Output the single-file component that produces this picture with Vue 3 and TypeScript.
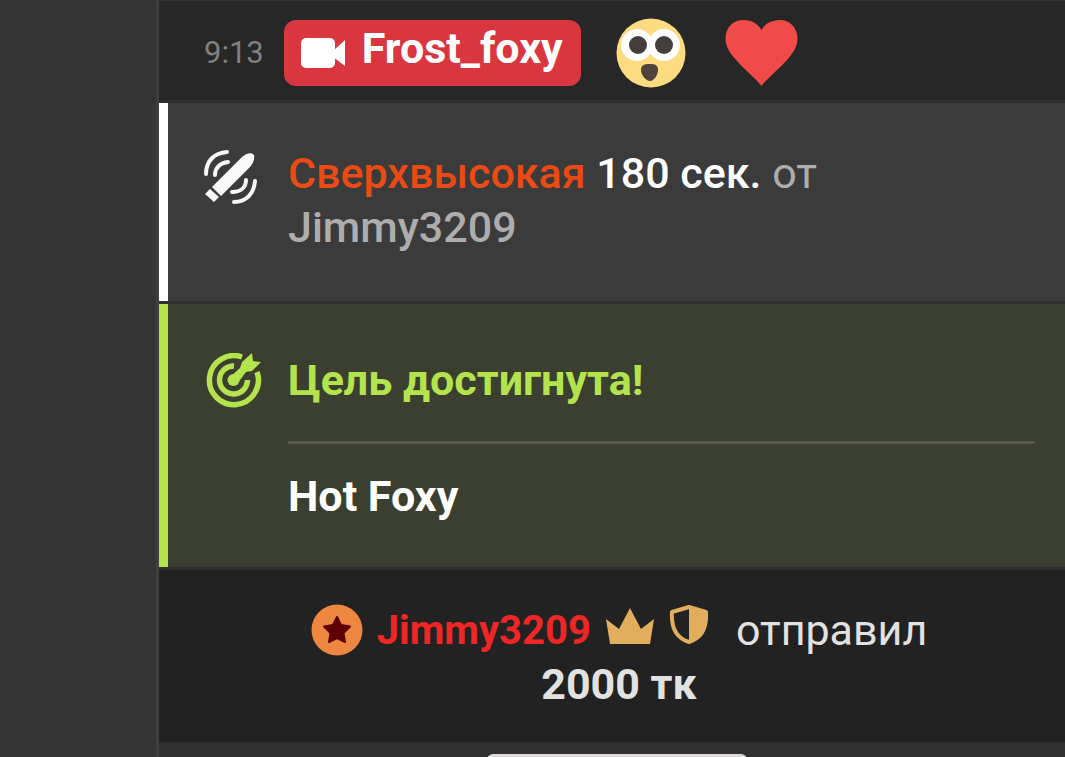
<script setup lang="ts">
interface Tip {
  user: string
  amount: number
}

const message = { time: '9:13', author: 'Frost_foxy' }
const toy = { level: 'Сверхвысокая', seconds: 180, user: 'Jimmy3209' }
const goal = { title: 'Цель достигнута!', name: 'Hot Foxy' }
const tip: Tip = { user: 'Jimmy3209', amount: 2000 }
</script>

<template>
  <div class="page">
    <aside class="gutter"></aside>
    <main class="feed">
      <article class="row message">
        <time class="time">{{ message.time }}</time>
        <a class="model" href="#">
          <svg class="camera" viewBox="0 0 46 30" aria-hidden="true">
            <rect x="1" y="0" width="34" height="30" rx="5" />
            <path d="M33 13 L45 2 V28 L33 19 Z" />
          </svg>
          <span>{{ message.author }}</span>
        </a>
        <svg class="emoji face" viewBox="0 0 70 70" role="img" aria-label="Удивление">
          <circle cx="35" cy="35" r="34.5" fill="#fddb80" />
          <circle cx="21" cy="27" r="16" fill="#fff" />
          <circle cx="48" cy="27" r="16" fill="#fff" />
          <circle cx="22" cy="27" r="9" fill="#443f3c" />
          <circle cx="48" cy="27" r="9" fill="#443f3c" />
          <path d="M25 52 C25 47 28 46 34 46 C39 46 42 47 42 52 C42 57 38 63 34 63 C30 63 25 57 25 52 Z" fill="#4f443c" />
        </svg>
        <svg class="emoji heart" viewBox="0 0 72 68" role="img" aria-label="Сердце">
          <path d="M36 67 C31 60 17 49 8 38 C3 32 0 26 0 20 C0 8 8 1 18 1 C26 1 33 5 36 11 C39 5 46 1 54 1 C64 1 72 8 72 20 C72 26 69 32 64 38 C55 49 41 60 36 67 Z" fill="#f04a49" />
        </svg>
      </article>

      <article class="row toy">
        <svg class="icon" viewBox="0 0 56 56" aria-hidden="true">
          <g fill="#f8f8f8">
            <path d="M8 37 L38 7 C42 3 48 2 50 5 C51 9 49 14 45 18 L17 46 Z" />
            <path d="M6 39 L15 47 L10 52 L1 44 Z" />
          </g>
          <g fill="none" stroke="#f8f8f8" stroke-width="4" stroke-linecap="round">
            <path d="M2 24 C2 11 10 3 23 2" />
            <path d="M11 25 C11 18 16 13 24 12" />
            <path d="M42 30 C42 38 36 42 28 42" />
            <path d="M51 31 C50 44 42 52 30 52" />
          </g>
        </svg>
        <p class="text">
          <span class="level">{{ toy.level }}</span> {{ toy.seconds }} сек.
          <span class="from"><span class="by">от</span> {{ toy.user }}</span>
        </p>
      </article>

      <article class="row goal">
        <svg class="icon" viewBox="0 0 56 56" aria-hidden="true">
          <g fill="none" stroke="#b3e34d" stroke-width="5.500">
            <path d="M36 4 A24.500 24.500 0 1 0 51 19" />
            <path d="M28 13 A14 14 0 1 0 41.500 27" />
          </g>
          <circle cx="27.500" cy="27" r="6" fill="#b3e34d" />
          <path d="M24 24 L34 15 L36 9 L46 0 L47 8 L55 9 L46 18 L40 19 L31 31 Z" fill="#b3e34d" />
        </svg>
        <div class="details">
          <h2 class="title">{{ goal.title }}</h2>
          <p class="name">{{ goal.name }}</p>
        </div>
      </article>

      <article class="row tip">
        <p class="sentence">
          <svg class="badge" viewBox="0 0 52 52" aria-hidden="true">
            <circle cx="26" cy="26" r="25.500" fill="#ed873f" />
            <path d="M26 13 L30 21 L39 22.500 L32.500 29 L34 38 L26 34 L18 38 L19.500 29 L13 22.500 L22 21 Z" fill="#5c0000" stroke="#5c0000" stroke-width="2" stroke-linejoin="round" />
          </svg>
          <a class="user" href="#">{{ tip.user }}</a>
          <svg class="crown" viewBox="0 0 48 38" aria-hidden="true">
            <path d="M0 12 L13 22 L24 1 L35 22 L48 12 L44 37 H4 Z" fill="#e0ae5c" />
          </svg>
          <svg class="shield" viewBox="0 0 40 40" aria-hidden="true">
            <path d="M20 2 L37 7 C38 22 33 33 20 37 C7 33 2 22 3 7 Z" fill="none" stroke="#e0ae5c" stroke-width="4" stroke-linejoin="round" />
            <path d="M20 2 L37 7 C38 22 33 33 20 37 Z" fill="#e0ae5c" />
          </svg>
          <span class="verb">отправил</span>
        </p>
        <p class="amount">{{ tip.amount }} тк</p>
      </article>

      <footer class="footer">
        <button class="more" type="button" aria-label="Новые сообщения"></button>
      </footer>
    </main>
  </div>
</template>

<style>
body {
  margin: 0;
  background: #353535;
}
</style>

<style scoped>
.page {
  display: flex;
  height: 100vh;
  overflow: hidden;
  background: #353535;
  color: #fff;
  font-family: Roboto, "Noto Sans", sans-serif;
  font-size: 43px;
  line-height: 54px;
}

.gutter {
  flex: 0 0 156px;
}

.feed {
  display: flex;
  flex: 1;
  flex-direction: column;
  gap: 3px;
  min-width: 0;
  border-left: 3px solid #3f3f3f;
  background: #303030;
}

.row {
  flex-shrink: 0;
}

p,
h2 {
  margin: 0;
}

a {
  color: inherit;
  text-decoration: none;
}

svg {
  flex-shrink: 0;
}

.message {
  display: flex;
  align-items: center;
  padding: 18px 30px 13px 45px;
  border-top: 1px solid #333;
  background: #272727;
}

.time {
  margin-right: 20px;
  color: #808080;
  font-size: 31px;
}

.model {
  display: flex;
  align-items: center;
  height: 66px;
  padding: 0 18px 0 16px;
  border-radius: 12px;
  background: #da3640;
  font-weight: 700;
}

.model span {
  padding-bottom: 10px;
}

.camera {
  width: 46px;
  height: 30px;
  margin-right: 16px;
  fill: #fff;
}

.face {
  width: 70px;
  height: 70px;
  margin: -1px 39px -1px 35px;
}

.heart {
  width: 73px;
  height: 68px;
}

.toy,
.goal {
  display: flex;
  border-left: 9px solid #fff;
}

.toy {
  padding: 43px 30px 47px 36px;
  background: #3b3b3b;
}

.icon {
  width: 56px;
  height: 56px;
  margin-right: 28px;
}

.toy .icon {
  margin-top: 4px;
}

.text {
  max-width: 600px;
  font-weight: 500;
}

.level {
  color: #ea4a14;
}

.from {
  color: #adadad;
}

.by {
  font-weight: 400;
}

.goal {
  padding: 49px 30px 44px 38px;
  border-left-color: #b3e34d;
  background: #3b3f2f;
}

.goal .icon {
  margin-right: 26px;
}

.details {
  flex: 1;
}

.title {
  padding-bottom: 34px;
  border-bottom: 3px solid #575a4b;
  color: #b3e34d;
  font-size: 43px;
  font-weight: 700;
}

.name {
  padding-top: 25px;
  font-weight: 700;
}

.tip {
  padding: 33px 30px 31px 44px;
  background: #222;
  color: #e2e2e2;
}

.sentence {
  display: flex;
  align-items: center;
  justify-content: center;
}

.badge {
  width: 52px;
  height: 52px;
  margin-right: 14px;
}

.user {
  padding-top: 2px;
  color: #ef2626;
  font-size: 40px;
  font-weight: 700;
  line-height: 52px;
}

.crown {
  width: 48px;
  height: 38px;
  margin: 0 15px 8px;
}

.shield {
  width: 40px;
  height: 40px;
  margin: 0 27px 10px 0;
}

.amount {
  font-weight: 700;
  text-align: center;
}

.footer {
  display: flex;
  flex: 1 0 auto;
  justify-content: center;
  padding-top: 9px;
}

.more {
  width: 260px;
  height: 60px;
  margin-left: 10px;
  border: 0;
  border-radius: 6px;
  background: #ddd9dd;
}
</style>
